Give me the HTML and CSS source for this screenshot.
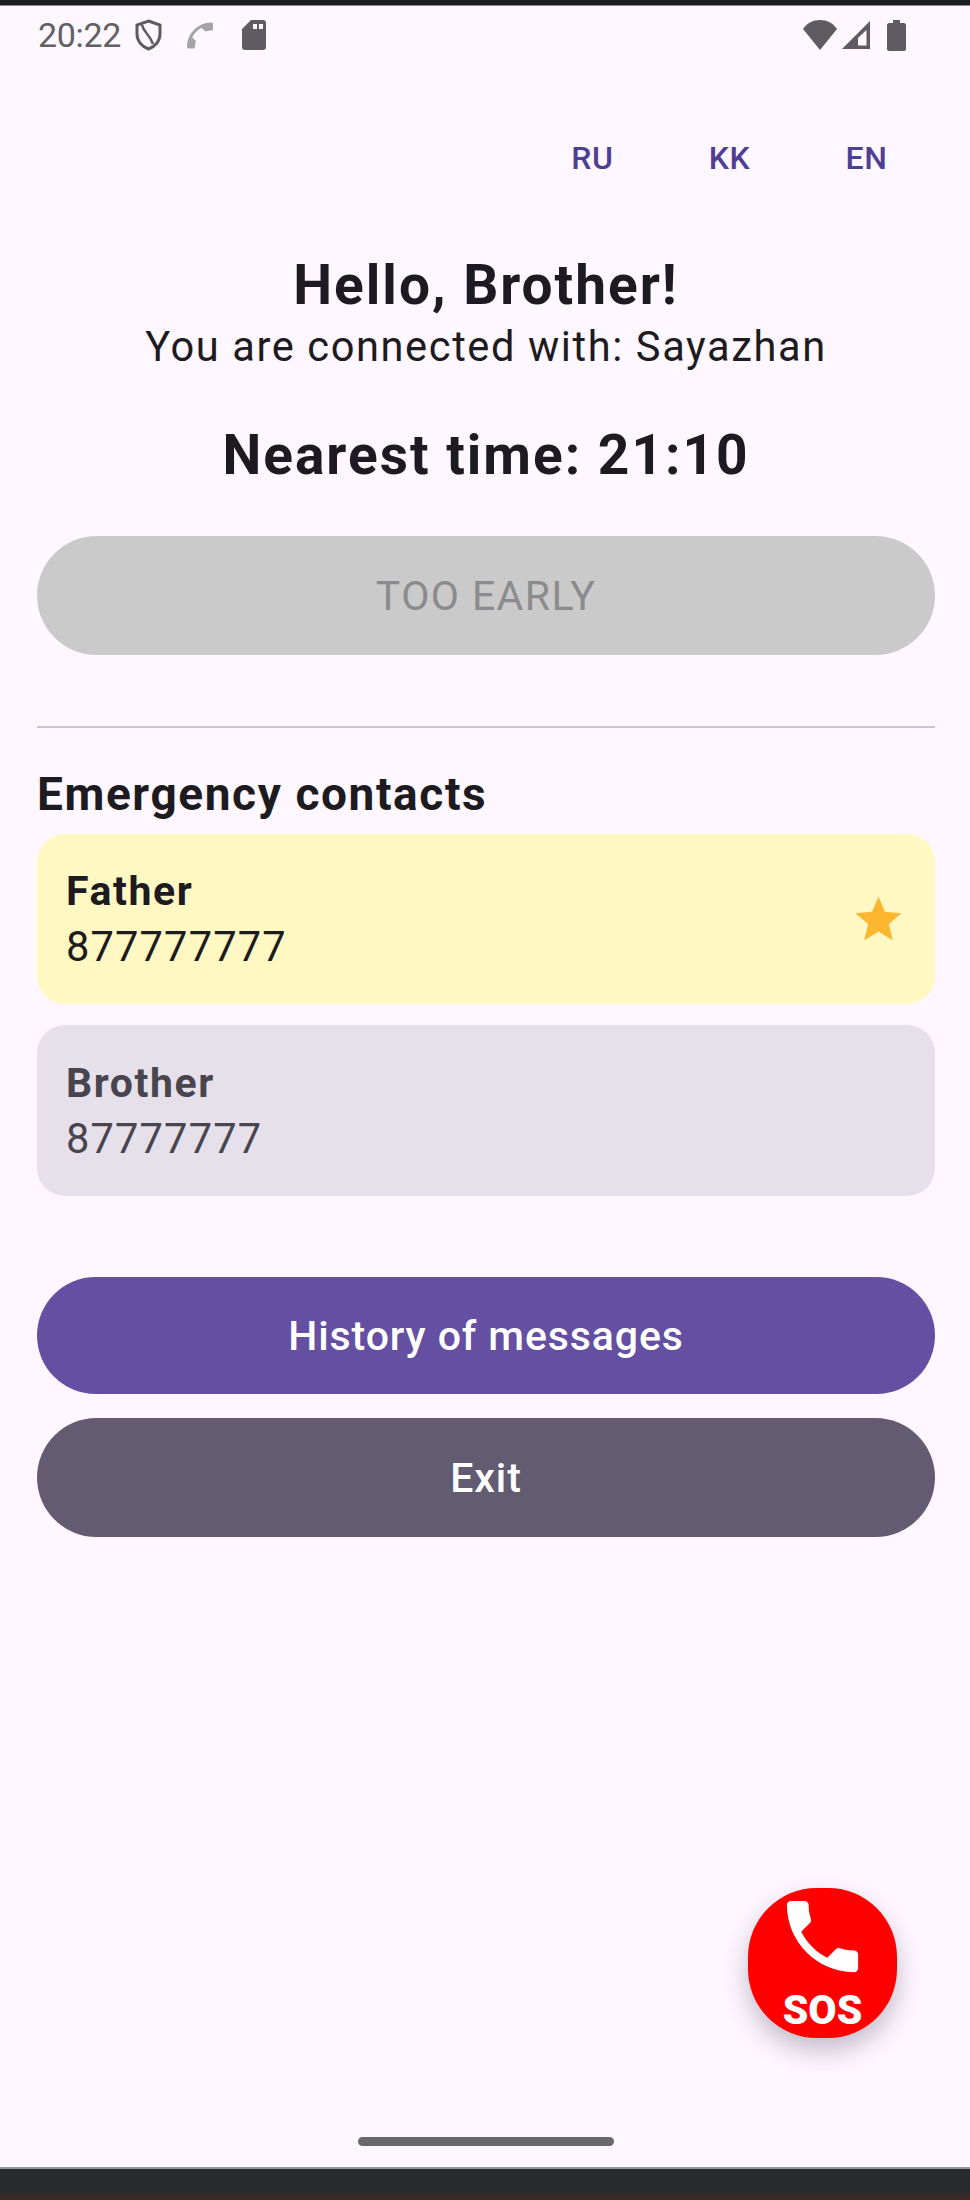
FILE: index.html
```html
<!DOCTYPE html>
<html lang="en">
<head>
<meta charset="utf-8">
<title>Hello, Brother!</title>
<link rel="stylesheet" href="styles.css">
</head>
<body>
<div class="device">
  <div class="top-edge"></div>
  <div class="screen">
    <header class="status">
      <div class="status-left">
        <span class="clock">20:22</span>
        <svg class="ic-shield" viewBox="0 0 27 32"><path d="M13.500 2 L25 6 V15 C25 22 20 27.500 13.500 30 C7 27.500 2 22 2 15 V6 Z" fill="none" stroke="#5c5c5e" stroke-width="3"/><path d="M7 6 C9 14 14 14 18 25" fill="none" stroke="#5c5c5e" stroke-width="2.500"/></svg>
        <svg class="ic-call" viewBox="3 3 18 18"><path transform="rotate(90 12 12)" d="M6.62 10.79c1.44 2.83 3.76 5.14 6.59 6.59l2.2-2.2c.27-.27.67-.36 1.02-.24 1.12.37 2.33.57 3.57.57.55 0 1 .45 1 1V20c0 .55-.45 1-1 1-9.39 0-17-7.61-17-17 0-.55.45-1 1-1h3.5c.55 0 1 .45 1 1 0 1.25.2 2.45.57 3.57.11.35.03.74-.25 1.02l-2.2 2.2z" fill="#a4a4a6"/></svg>
        <svg class="ic-sim" viewBox="0 0 24 30"><path d="M9 0 H21 C23 0 24 1 24 3 V27 C24 29 23 30 21 30 H3 C1 30 0 29 0 27 V9 Z" fill="#5f5c61"/><rect x="11" y="4" width="4" height="5" fill="#fef7ff"/><rect x="17" y="4" width="4" height="5" fill="#fef7ff"/></svg>
      </div>
      <div class="status-right">
        <svg class="ic-wifi" viewBox="0 0 34 30"><path d="M17 30 L0 9 C4 3 10 0 17 0 C24 0 30 3 34 9 Z" fill="#5f5c61"/></svg>
        <svg class="ic-signal" viewBox="0 0 28 28"><path d="M28 0 V28 H0 Z" fill="#5f5c61"/><path d="M24.500 9 V24.500 H16 V17 Z" fill="#fef7ff"/></svg>
        <svg class="ic-battery" viewBox="0 0 19 31"><path d="M6 0 H13 V3 H17 C18 3 19 4 19 5 V29 C19 30 18 31 17 31 H2 C1 31 0 30 0 29 V5 C0 4 1 3 2 3 H6 Z" fill="#5f5c61"/></svg>
      </div>
    </header>

    <main class="content">
      <nav class="langs">
        <span class="lang">RU</span>
        <span class="lang">KK</span>
        <span class="lang">EN</span>
      </nav>

      <h1 class="hello">Hello, Brother!</h1>
      <p class="connected">You are connected with: Sayazhan</p>
      <h2 class="nearest">Nearest time: 21:10</h2>

      <div class="btn btn-disabled">TOO EARLY</div>

      <hr class="divider">

      <h3 class="section">Emergency contacts</h3>

      <div class="card card-primary">
        <div class="card-text">
          <div class="card-name">Father</div>
          <div class="card-phone">877777777</div>
        </div>
        <svg class="star" viewBox="0 0 24 24"><path d="M12 17.27L18.18 21l-1.64-7.03L22 9.24l-7.19-.61L12 2 9.19 8.63 2 9.24l5.46 4.73L5.82 21z"/></svg>
      </div>

      <div class="card card-other">
        <div class="card-text">
          <div class="card-name">Brother</div>
          <div class="card-phone">87777777</div>
        </div>
      </div>

      <div class="btn btn-history">History of messages</div>
      <div class="btn btn-exit">Exit</div>
    </main>

    <div class="sos">
      <svg class="sos-icon" viewBox="0 0 24 24"><path d="M6.62 10.79c1.44 2.83 3.76 5.14 6.59 6.59l2.2-2.2c.27-.27.67-.36 1.02-.24 1.12.37 2.33.57 3.57.57.55 0 1 .45 1 1V20c0 .55-.45 1-1 1-9.39 0-17-7.61-17-17 0-.55.45-1 1-1h3.5c.55 0 1 .45 1 1 0 1.25.2 2.45.57 3.57.11.35.03.74-.25 1.02l-2.2 2.2z"/></svg>
      <span class="sos-label">SOS</span>
    </div>

    <div class="home-wrap"><div class="home-bar"></div></div>
  </div>
  <div class="bottom-dark"></div>
  <div class="bottom-brown"></div>
</div>
</body>
</html>
```

FILE: styles.css
```css
* { box-sizing: border-box; }
html, body { margin: 0; padding: 0; background: #fef7ff; }
body { font-family: Roboto, "Liberation Sans", sans-serif; color: #1d1b20; }

.device { width: 970px; height: 2200px; display: flex; flex-direction: column; overflow: hidden; }
.top-edge { height: 6px; background: #1d1e22; border-bottom: 1px solid #8a8a8c; flex: none; }
.screen { position: relative; flex: 1; display: flex; flex-direction: column; background: #fef7ff; min-height: 0; }
.bottom-dark { height: 27px; background: #2a2b2f; border-top: 2px solid #9a9a9c; flex: none; }
.bottom-brown { height: 6px; background: #3a2b24; flex: none; }

.status { height: 54px; flex: none; display: flex; justify-content: space-between; align-items: center; padding: 4px 64px 0 38px; }
.status-left, .status-right { display: flex; align-items: center; }
.clock { font-size: 34px; color: #616063; width: 97px; letter-spacing: -0.3px; }
.ic-shield { width: 27px; height: 32px; }
.ic-call { width: 26px; height: 27px; margin-left: 25px; }
.ic-sim { width: 24px; height: 30px; margin-left: 29px; }
.ic-wifi { width: 34px; height: 30px; }
.ic-signal { width: 28px; height: 28px; margin-left: 5px; }
.ic-battery { width: 19px; height: 31px; margin-left: 17px; }

.content { flex: 1; display: flex; flex-direction: column; padding: 0 35px 0 37px; min-height: 0; }

.langs { display: flex; justify-content: flex-end; margin-top: 48px; height: 100px; align-items: center; }
.lang { width: 137px; text-align: center; font-size: 32px; font-weight: 500; color: #4f3f94; letter-spacing: 0.6px; }

.hello { margin: 47px 0 0; text-align: center; font-size: 55px; line-height: 60px; font-weight: 700; letter-spacing: 2px; }
.connected { margin: 7px 0 0; text-align: center; font-size: 41.6px; line-height: 50px; font-weight: 400; letter-spacing: 1.6px; }
.nearest { margin: 53px 0 0; text-align: center; font-size: 55px; line-height: 60px; font-weight: 700; letter-spacing: 2px; }

.btn { height: 119px; border-radius: 60px; display: flex; align-items: center; justify-content: center; font-size: 41px; font-weight: 500; letter-spacing: 0.9px; flex: none; }
.btn-disabled { margin-top: 51px; background: #cacaca; color: #8b8b8d; font-weight: 400; letter-spacing: 1.4px; }
.btn-history { height: 117px; margin-top: 81px; background: #654fa2; color: #fff; }
.btn-exit { margin-top: 24px; background: #625b71; color: #fff; }

.divider { margin: 71px 0 0; border: 0; height: 2px; background: #cac4d0; flex: none; }

.section { margin: 38px 0 12px; font-size: 46px; line-height: 56px; font-weight: 700; letter-spacing: 1.6px; }

.card { display: flex; align-items: center; justify-content: space-between; border-radius: 28px; padding: 0 29px 0 29px; flex: none; }
.card-primary { height: 170px; background: #fff8c2; }
.card-other { height: 171px; margin-top: 21px; background: #e6e0eb; color: #49454f; }
.card-name { font-size: 41px; line-height: 56px; font-weight: 700; letter-spacing: 1.6px; }
.card-phone { font-size: 41.6px; line-height: 56px; letter-spacing: 1.15px; }
.star { width: 55px; height: 55px; fill: #fdb62f; }

.sos { position: absolute; left: 748px; top: 1882px; width: 149px; height: 150px; border-radius: 46%; background: #ff0000; box-shadow: 0 12px 26px rgba(60, 50, 80, 0.3); display: flex; flex-direction: column; align-items: center; }
.sos-icon { width: 95px; height: 95px; fill: #fff; margin-top: 1px; flex: none; }
.sos-label { font-size: 41px; line-height: 40px; font-weight: 900; color: #fff; margin-top: 6px; }

.home-wrap { height: 30px; flex: none; display: flex; justify-content: center; padding-left: 2px; }
.home-bar { width: 256px; height: 9px; border-radius: 5px; background: #69696b; }
```
